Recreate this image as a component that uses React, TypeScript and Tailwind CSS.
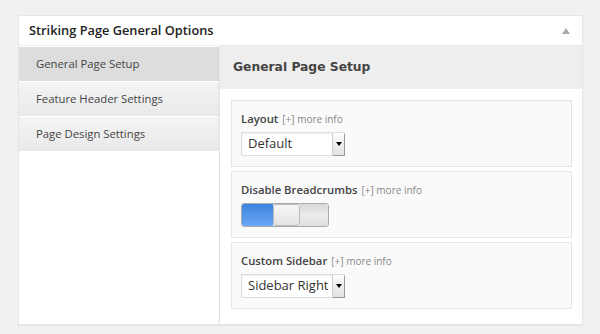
import React from "react";

function MoreInfo() {
    return <span className="ml-1 text-[10px] font-normal text-[#888]">[+] more info</span>;
}

function Select({ value, width }: { value: string; width: string }) {
    return (
        <div className={`flex h-[24px] ${width} border border-[#dcdcdc] bg-white shadow-[inset_0_1px_2px_rgba(0,0,0,0.07)]`}>
            <div className="flex flex-1 items-center pl-[6px] text-[13px] text-[#333]">{value}</div>
            <div className="flex w-[12px] items-center justify-center border-l border-[#ccc] bg-gradient-to-b from-[#fdfdfd] to-[#e2e2e2] shadow-[1px_1px_0_#999]">
                <div className="h-0 w-0 border-x-[3px] border-t-[4px] border-x-transparent border-t-black" />
            </div>
        </div>
    );
}

function Toggle() {
    return (
        <div className="flex h-[24px] w-[88px] overflow-hidden rounded-[3px] border border-[#aaa]">
            <div className="w-[31px] bg-gradient-to-b from-[#3b83e0] to-[#6aa7f2]" />
            <div className="w-[27px] rounded-[3px] border border-[#bbb] bg-gradient-to-b from-[#f6f6f6] to-[#e4e4e4]" />
            <div className="flex-1 bg-gradient-to-b from-[#d8d8d8] via-[#ececec] to-[#dedede]" />
        </div>
    );
}

function OptionBox({ label, children }: { label: string; children: React.ReactNode }) {
    return (
        <div className="flex flex-col gap-[5px] border border-[#e5e5e5] bg-[#fafafa] px-[9px] pb-[10px] pt-[10px]">
            <div className="text-[11.3px] font-semibold leading-[16px] text-[#444]">
                {label}
                <MoreInfo />
            </div>
            {children}
        </div>
    );
}

const nav = ["General Page Setup", "Feature Header Settings", "Page Design Settings"];

export default function App() {
    return (
        <div className="min-h-[334px] w-[600px] bg-[#f1f1f1] pl-[18px] pt-[15px] font-['Open_Sans',sans-serif]">
            <div className="w-[565px] border border-[#e5e5e5] bg-white shadow-[0_1px_1px_rgba(0,0,0,0.04)]">
                <div className="flex h-[30px] items-center justify-between border-b border-[#eee] pl-[10px] pr-[12px]">
                    <h3 className="text-[12.8px] font-semibold text-[#222]">Striking Page General Options</h3>
                    <div className="h-0 w-0 border-x-[4px] border-b-[6px] border-x-transparent border-b-[#aaa]" />
                </div>
                <div className="flex">
                    <ul className="flex w-[200px] flex-col gap-[1px] pt-[1px]">
                        {nav.map((item, index) => (
                            <li
                                key={`nav-${index + 1}`}
                                className={`flex h-[34px] items-center pl-[17px] text-[11.3px] text-[#444] ${index === 0 ? "bg-[#dddddd]" : "bg-gradient-to-b from-[#f4f4f4] to-[#e9e9e9]"}`}
                            >
                                {item}
                            </li>
                        ))}
                    </ul>
                    <div className="flex-1 border-l border-[#e5e5e5] pb-[15px] shadow-[-1px_0_2px_rgba(0,0,0,0.03)]">
                        <div className="flex h-[43px] items-center bg-[#eeeeee] pl-[13px] font-['DejaVu_Sans',sans-serif] text-[12.3px] font-bold text-[#444]">
                            General Page Setup
                        </div>
                        <div className="flex flex-col gap-[4px] pl-[11px] pr-[10px] pt-[11px]">
                            <OptionBox label="Layout">
                                <Select value="Default" width="w-[104px]" />
                            </OptionBox>
                            <OptionBox label="Disable Breadcrumbs">
                                <Toggle />
                            </OptionBox>
                            <OptionBox label="Custom Sidebar">
                                <Select value="Sidebar Right" width="w-[104px]" />
                            </OptionBox>
                        </div>
                    </div>
                </div>
            </div>
        </div>
    );
}
